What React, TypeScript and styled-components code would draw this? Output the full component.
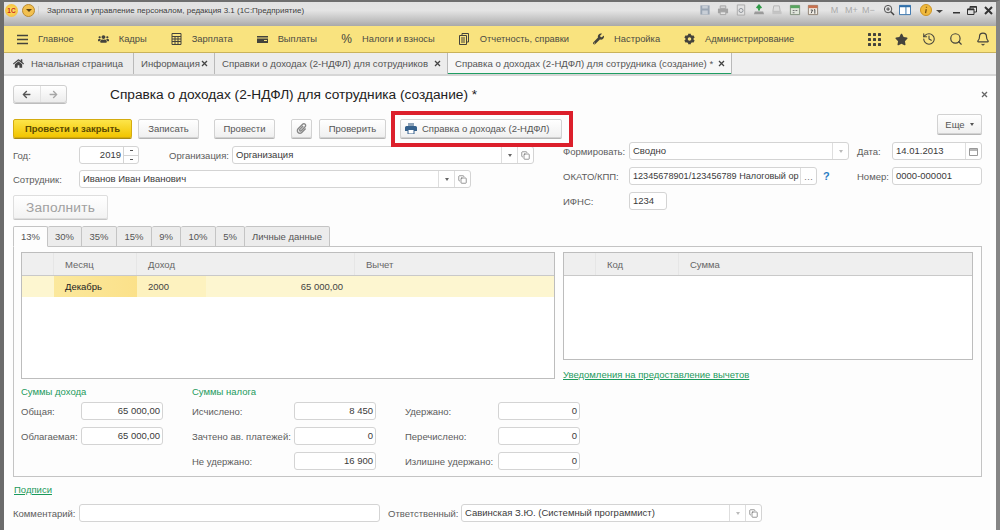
import React from "react";
import styled, { createGlobalStyle } from "styled-components";
import { FaHome, FaUsers, FaWrench, FaCog, FaStar, FaPaperclip, FaArrowLeft, FaArrowRight } from "react-icons/fa";
import { History, Search, Bell, Copy } from "lucide-react";

const GlobalStyle = createGlobalStyle`
  html, body {
    margin: 0;
    padding: 0;
    background: #fff;
  }
  * {
    box-sizing: border-box;
  }
`;

const Window = styled.div`
  width: 1000px;
  height: 530px;
  overflow: hidden;
  display: flex;
  flex-direction: column;
  font-family: "Liberation Sans", Arial, sans-serif;
  font-size: 9.5px;
  color: #4a4a4a;
  background: #fdfdfd;
  border-top: 2px solid #6e6e6e;
  border-left: 4px solid #6b6b6b;
  border-right: 4px solid #858585;
`;

/* заголовок окна */
const TitleBar = styled.div`
  height: 24px;
  flex: none;
  display: flex;
  align-items: center;
  padding: 0 0 8px 2px;
  background: linear-gradient(#e2e2e2 0%, #e4e4e4 35%, #bdbdbd 80%, #a9a9a9 100%);
  margin-left: -1px;
`;

const Logo = styled.div`
  width: 13px;
  height: 13px;
  border-radius: 50%;
  background: radial-gradient(#ffe26a, #f3b52c);
  color: #c8281e;
  font-size: 6.5px;
  font-weight: 700;
  line-height: 13px;
  text-align: center;
`;

const MenuRound = styled.div`
  width: 13px;
  height: 13px;
  margin-left: 4px;
  border-radius: 50%;
  background: #f2c04f;
  border: 1px solid #b98a2e;
  display: flex;
  align-items: center;
  justify-content: center;
  &::after {
    content: "";
    border-left: 3px solid transparent;
    border-right: 3px solid transparent;
    border-top: 3px solid #5a4212;
  }
`;

const WindowName = styled.div`
  margin-left: 3px;
  padding-left: 8px;
  border-left: 1px solid #cfcfcf;
  font-size: 8px;
  color: #3c3c3c;
  white-space: nowrap;
`;

const TitleTools = styled.div`
  margin-left: auto;
  display: flex;
  align-items: center;
  height: 16px;
`;

const ToolSlot = styled.div<{ $w: number; $mr?: number }>`
  width: ${(p) => p.$w}px;
  margin-right: ${(p) => p.$mr ?? 0}px;
  flex: none;
  display: flex;
  justify-content: center;
  align-items: center;
`;

const MemoryText = styled.span`
  font-size: 9px;
  color: #a9a9a9;
`;

const Svg13 = ({ children }: { children: React.ReactNode }) => (
  <svg width="12" height="12" viewBox="0 0 13 13" fill="none">
    {children}
  </svg>
);

/* панель разделов */
const NavBar = styled.div`
  height: 27px;
  flex: none;
  display: flex;
  align-items: center;
  padding-left: 13px;
  background: #f9e37f;
  border-bottom: 1px solid #c9b25a;
`;

const NavItem = styled.div`
  display: flex;
  align-items: center;
  margin-right: 24px;
  color: #4c4c44;
  font-size: 9.35px;
  white-space: nowrap;
`;

const NavIcon = styled.span`
  width: 11px;
  margin-right: 10px;
  display: flex;
  justify-content: center;
  color: #44433c;
  font-size: 12px;
`;

const NavRight = styled.div`
  margin-left: auto;
  display: flex;
  align-items: center;
  color: #44433c;
`;

const NavRightIcon = styled.span`
  width: 27px;
  display: flex;
  justify-content: center;
`;

/* вкладки открытых окон */
const OpenTabs = styled.div`
  height: 23px;
  flex: none;
  display: flex;
  background: #f0f0f0;
  border-bottom: 2px solid #d6d6d6;
  font-size: 9.65px;
`;

const OpenTab = styled.div<{ $w: number; $active?: boolean }>`
  width: ${(p) => p.$w}px;
  flex: none;
  display: flex;
  align-items: center;
  justify-content: space-between;
  padding: 0 6px 0 7px;
  white-space: nowrap;
  color: #555;
  background: ${(p) => (p.$active ? "#f7f7f7" : "#ececec")};
  border-right: 1px solid #b9b9b9;
  box-shadow: ${(p) => (p.$active ? "inset 0 -1px 0 #1f9e63" : "none")};
`;

const HomeLabel = styled.span`
  display: flex;
  align-items: center;
  gap: 7px;
  padding-left: 2px;
  font-size: 9.5px;
  svg {
    color: #444;
    font-size: 11px;
  }
`;

const CloseCross = styled.svg`
  width: 7px;
  height: 7px;
  flex: none;
`;

const Cross = ({ color = "#444" }: { color?: string }) => (
  <CloseCross viewBox="0 0 7 7">
    <path d="M1 1l5 5M6 1L1 6" stroke={color} strokeWidth="1.3" />
  </CloseCross>
);

/* форма */
const Form = styled.div`
  flex: 1;
  padding: 9px 14px 0 9px;
  display: flex;
  flex-direction: column;
`;

const Header = styled.div`
  height: 18px;
  margin-right: -6px;
  display: flex;
  align-items: center;
`;

const NavButtons = styled.div`
  width: 54px;
  height: 18px;
  display: flex;
  border: 1px solid #cfcfcf;
  border-radius: 3px;
  background: linear-gradient(#fff, #ececec);
  box-shadow: 0 1px 0 #bdbdbd;
  font-size: 9px;
`;

const ArrowBox = styled.span<{ $off?: boolean }>`
  flex: 1;
  display: flex;
  align-items: center;
  justify-content: center;
  color: ${(p) => (p.$off ? "#a6a6a6" : "#555")};
  & + & {
    border-left: 1px solid #e2e2e2;
  }
`;

const FormTitle = styled.h1`
  margin: 1px 0 0 43px;
  font-size: 13.7px;
  font-weight: 400;
  color: #222;
  white-space: nowrap;
`;

const HeaderClose = styled.div`
  margin-left: auto;
  display: flex;
`;

const Toolbar = styled.div`
  margin-top: 11px;
  height: 24px;
  display: flex;
  align-items: flex-end;
`;

const Button = styled.div<{ $w: number; $ml?: number; $primary?: boolean }>`
  width: ${(p) => p.$w}px;
  height: 19px;
  flex: none;
  margin-left: ${(p) => p.$ml ?? 0}px;
  display: flex;
  align-items: center;
  justify-content: center;
  gap: 6px;
  white-space: nowrap;
  border-radius: 2px;
  color: ${(p) => (p.$primary ? "#5b4a00" : "#555")};
  font-weight: ${(p) => (p.$primary ? 700 : 400)};
  background: ${(p) => (p.$primary ? "linear-gradient(#fde54a, #f2c500)" : "linear-gradient(#fff, #f0f0f0)")};
  border: 1px solid ${(p) => (p.$primary ? "#d4ac10" : "#d2d2d2")};
  box-shadow: 0 1px 0 ${(p) => (p.$primary ? "#a98a12" : "#b5b5b5")};
`;

const HighlightedButton = styled.div`
  position: relative;
  margin-left: 14px;
  display: flex;
  &::after {
    content: "";
    position: absolute;
    left: -9px;
    right: -11px;
    top: -8px;
    bottom: -9px;
    border: 4px solid #dc1f2b;
    pointer-events: none;
  }
`;

const PrintButton = styled(Button)`
  justify-content: flex-start;
  padding-left: 4px;
  gap: 5px;
`;

const MoreButton = styled(Button)`
  align-self: flex-start;
  margin-left: auto;
  height: 20px;
  gap: 5px;
  &::after {
    content: "";
    border-left: 2.5px solid transparent;
    border-right: 2.5px solid transparent;
    border-top: 3px solid #555;
  }
`;

const Upper = styled.div`
  height: 88px;
  flex: none;
  display: flex;
  gap: 29px;
`;

const LeftColumn = styled.div`
  width: 521px;
  padding-top: 8px;
  display: flex;
  flex-direction: column;
  gap: 6px;
`;

const RightColumn = styled.div`
  width: 419px;
  padding-top: 4px;
  display: flex;
  flex-direction: column;
  gap: 7px;
`;

const Row = styled.div`
  display: flex;
  align-items: center;
  height: 18px;
  flex: none;
`;

const Label = styled.div<{ $w: number; $ml?: number }>`
  width: ${(p) => p.$w}px;
  flex: none;
  margin-left: ${(p) => p.$ml ?? 0}px;
  white-space: nowrap;
  color: #5c5c5c;
`;

const Field = styled.div<{ $w: number }>`
  width: ${(p) => p.$w}px;
  height: 18px;
  flex: none;
  display: flex;
  background: #fff;
  border: 1px solid #d4d4d4;
  border-radius: 3px;
  color: #3a3a3a;
`;

const Value = styled.div<{ $right?: boolean }>`
  flex: 1;
  min-width: 0;
  overflow: hidden;
  white-space: nowrap;
  line-height: 16px;
  padding: 0 ${(p) => (p.$right ? "2px" : "3px")};
  text-align: ${(p) => (p.$right ? "right" : "left")};
`;

const TightValue = styled(Value)`
  padding-right: 0;
  font-size: 9.1px;
`;

const SideButton = styled.div<{ $w?: number }>`
  width: ${(p) => p.$w ?? 16}px;
  flex: none;
  display: flex;
  align-items: center;
  justify-content: center;
  border-left: 1px solid #dedede;
  color: #777;
`;

const SmallCaret = styled.span<{ $light?: boolean }>`
  border-left: 2px solid transparent;
  border-right: 2px solid transparent;
  border-top: 3px solid ${(p) => (p.$light ? "#bbb" : "#666")};
`;

const Spin = styled.div`
  width: 15px;
  flex: none;
  display: flex;
  flex-direction: column;
  border-left: 1px solid #d4d4d4;
`;

const SpinPart = styled.div<{ $down?: boolean }>`
  flex: 1;
  display: flex;
  align-items: center;
  justify-content: center;
  border-top: ${(p) => (p.$down ? "1px solid #d4d4d4" : "none")};
  &::after {
    content: "";
    width: 3px;
    height: 1px;
    background: #555;
  }
`;

const HelpMark = styled.span`
  width: 31px;
  padding-left: 6px;
  flex: none;
  color: #2b7fc4;
  font-weight: 700;
  font-size: 11px;
`;

const FillButton = styled.div`
  width: 95px;
  height: 24px;
  margin-top: 1px;
  display: flex;
  align-items: center;
  justify-content: center;
  color: #a0a0a0;
  font-size: 13.7px;
  letter-spacing: 0.2px;
  border: 1px solid #dedede;
  border-radius: 2px;
  background: linear-gradient(#fff, #f3f3f3);
  box-shadow: 0 1px 0 #c6c6c6;
`;

/* вкладки ставок */
const RateTabs = styled.div`
  height: 21px;
  flex: none;
  display: flex;
  position: relative;
  z-index: 1;
  margin-bottom: -1px;
`;

const RateTab = styled.div<{ $w: number; $active?: boolean }>`
  width: ${(p) => p.$w}px;
  display: flex;
  align-items: center;
  justify-content: center;
  white-space: nowrap;
  color: #555;
  background: ${(p) => (p.$active ? "#fdfdfd" : "#ececec")};
  border: 1px solid #c4c4c4;
  border-left-width: ${(p) => (p.$active ? 1 : 0)}px;
  border-bottom-color: ${(p) => (p.$active ? "#fdfdfd" : "#c4c4c4")};
  border-radius: 2px 2px 0 0;
`;

const Panel = styled.div`
  width: 969px;
  height: 231px;
  flex: none;
  padding: 5px 7px 0;
  border: 1px solid #c4c4c4;
  display: flex;
  flex-direction: column;
`;

const Tables = styled.div`
  height: 128px;
  flex: none;
  display: flex;
  gap: 8px;
`;

const TableBox = styled.div<{ $w: number; $h: number }>`
  width: ${(p) => p.$w}px;
  height: ${(p) => p.$h}px;
  flex: none;
  background: #fff;
  border: 1px solid #bdbdbd;
`;

const GridRow = styled.div<{ $cols: string; $head?: boolean }>`
  display: grid;
  grid-template-columns: ${(p) => p.$cols};
  height: ${(p) => (p.$head ? 23 : 21)}px;
  background: ${(p) => (p.$head ? "#efefef" : "#fdf6d0")};
  border-bottom: ${(p) => (p.$head ? "1px solid #c9c9c9" : "none")};
`;

const HeadCell = styled.div<{ $pl?: number }>`
  display: flex;
  align-items: center;
  padding-left: ${(p) => p.$pl ?? 11}px;
  color: #666;
  border-right: 1px solid #e6e6e6;
  &:last-child {
    border-right: none;
  }
`;

const Cell = styled.div<{ $selected?: boolean; $right?: boolean; $soft?: boolean }>`
  display: flex;
  align-items: center;
  justify-content: ${(p) => (p.$right ? "flex-end" : "flex-start")};
  padding: 0 ${(p) => (p.$right ? "12px" : "11px")};
  color: ${(p) => (p.$selected ? "#222" : "#444")};
  background: ${(p) => (p.$selected ? "linear-gradient(90deg, #fbe89c, #fbe18a)" : p.$soft ? "#fdf2bf" : "transparent")};
`;

const RightTableColumn = styled.div`
  display: flex;
  flex-direction: column;
`;

const GreenLink = styled.a`
  color: #1c9a5c;
  text-decoration: underline;
  white-space: nowrap;
`;

const NoticeLink = styled(GreenLink)`
  margin-top: 9px;
`;

const Totals = styled.div`
  margin-top: 7px;
  display: flex;
`;

const TotalsGroup = styled.div<{ $w: number }>`
  width: ${(p) => p.$w}px;
  flex: none;
  display: flex;
  flex-direction: column;
  gap: 7px;
`;

const GroupTitle = styled.div`
  height: 10px;
  line-height: 10px;
  color: #1c9a5c;
  margin-bottom: -2px;
  white-space: nowrap;
`;

const Spacer = styled.div`
  height: 10px;
  margin-bottom: -2px;
`;

const Signatures = styled.div`
  margin-top: 7px;
  height: 12px;
  line-height: 12px;
  padding-left: 1px;
`;

const CommentRow = styled(Row)`
  margin-top: 8px;
`;

const TitleIcons = () => (
  <TitleTools>
    <ToolSlot $w={18}>
      <Svg13>
        <path d="M1.5 1.5h10v10h-10z" fill="#9aa6b4" />
        <path d="M3.5 2h6v3h-6zM3.5 7h6v4h-6z" fill="#c8ced6" />
      </Svg13>
    </ToolSlot>
    <ToolSlot $w={18}>
      <Svg13>
        <path d="M3.5 2h6v3h-6z" fill="#d4d4d4" stroke="#a4a4a4" />
        <path d="M1 5h11v5H1z" fill="#a4a4a4" />
        <path d="M3.5 8.5h6v3h-6z" fill="#e4e4e4" stroke="#a4a4a4" />
      </Svg13>
    </ToolSlot>
    <ToolSlot $w={18}>
      <Svg13>
        <path d="M2.5 1h8v11h-8z" fill="#e2e2e2" stroke="#a8a8a8" />
        <circle cx="6.5" cy="7" r="2.2" stroke="#8a8f96" />
      </Svg13>
    </ToolSlot>
    <ToolSlot $w={18}>
      <Svg13>
        <path d="M2 8h9l1 3H1z" fill="#9a9a9a" />
        <path d="M6.5 7V3M4 4.5l2.5-3 2.5 3" stroke="#2e9a47" strokeWidth="2" />
      </Svg13>
    </ToolSlot>
    <ToolSlot $w={18}>
      <Svg13>
        <path d="M3 2h6l1 6H2z" fill="#dedede" stroke="#b4b4b4" />
        <path d="M1.5 8h10v3h-10z" fill="#c4c4c4" />
      </Svg13>
    </ToolSlot>
    <ToolSlot $w={18}>
      <Svg13>
        <path d="M1.5 1.5h10v10h-10z" fill="#dfe5da" stroke="#7d8d78" />
        <path d="M1.5 1.5h10v3h-10z" fill="#57a65e" />
        <path d="M4 6.5h2v1H4zM7 6.5h2v1H7zM4 9h2v1H4z" fill="#777" />
      </Svg13>
    </ToolSlot>
    <ToolSlot $w={18} $mr={4}>
      <Svg13>
        <path d="M1.5 1.5h10v10h-10z" fill="#f0ece4" stroke="#8b7e70" />
        <path d="M1.5 1.5h10v3h-10z" fill="#c8714f" />
        <path d="M4 6.5h2L4.5 10M7.5 6.5l1-.5v4.5" stroke="#444" />
      </Svg13>
    </ToolSlot>
    <ToolSlot $w={17}><MemoryText>M</MemoryText></ToolSlot>
    <ToolSlot $w={17}><MemoryText>M+</MemoryText></ToolSlot>
    <ToolSlot $w={17} $mr={4}><MemoryText>M−</MemoryText></ToolSlot>
    <ToolSlot $w={16}>
      <Svg13>
        <circle cx="5.5" cy="5.5" r="4" stroke="#444" />
        <path d="M8.5 8.5l3.5 3.5" stroke="#444" strokeWidth="1.6" />
        <path d="M3.5 5.5h4M5.5 3.5v4" stroke="#444" />
      </Svg13>
    </ToolSlot>
    <ToolSlot $w={16} $mr={5}>
      <Svg13>
        <path d="M.5 1.5h12v10H.5z" fill="#fff" stroke="#2f6ea8" />
        <path d="M.5 1.5h12v2H.5z" fill="#2f6ea8" />
        <path d="M7.5 2v9" stroke="#2f6ea8" />
      </Svg13>
    </ToolSlot>
    <ToolSlot $w={16}>
      <Svg13>
        <circle cx="6.5" cy="6.5" r="6" fill="#f0b93c" stroke="#c98f1e" />
        <path d="M7 3v1M6.8 5.5L6 10" stroke="#7a5310" strokeWidth="1.4" />
      </Svg13>
    </ToolSlot>
    <ToolSlot $w={10} $mr={4}>
      <svg width="7" height="6" viewBox="0 0 7 6">
        <path d="M0 3h7L3.5 6z" fill="#444" />
      </svg>
    </ToolSlot>
    <ToolSlot $w={16}>
      <svg width="7" height="8" viewBox="0 0 7 8">
        <path d="M0 6h7v1.5H0z" fill="#333" />
      </svg>
    </ToolSlot>
    <ToolSlot $w={16}>
      <svg width="10" height="9" viewBox="0 0 10 9" fill="none">
        <path d="M.5 3h6.5v5.5H.5zM3 3V.5h6.5V6H7" stroke="#333" />
        <path d="M.5 3.5h6.5M3 1h6.5" stroke="#333" strokeWidth="1.4" />
      </svg>
    </ToolSlot>
    <ToolSlot $w={16}>
      <svg width="9" height="9" viewBox="0 0 9 9">
        <path d="M1 1l7 7M8 1L1 8" stroke="#333" strokeWidth="2" />
      </svg>
    </ToolSlot>
  </TitleTools>
);

const MenuIcon = () => (
  <svg width="11" height="11" viewBox="0 0 11 11">
    <path d="M0 1.5h11M0 5.5h11M0 9.5h11" stroke="#44433c" strokeWidth="1.3" />
  </svg>
);

const CalcIcon = () => (
  <svg width="11" height="12" viewBox="0 0 11 12" fill="none">
    <path d="M1 .5h9v11H1z" stroke="#44433c" />
    <path d="M1 3.5h9M1 6h9M1 8.5h9M4 3.5v8M7 3.5v8" stroke="#44433c" />
  </svg>
);

const WalletIcon = () => (
  <svg width="11" height="9" viewBox="0 0 11 9">
    <path d="M0 1h11v7H0z" fill="#44433c" />
    <path d="M0 3h11" stroke="#f9e37f" />
    <path d="M7 5.5h3" stroke="#f9e37f" />
  </svg>
);

const ReportIcon = () => (
  <svg width="10" height="12" viewBox="0 0 10 12" fill="none">
    <path d="M3 2.5V.5h6.5v8.5H7.5" stroke="#44433c" />
    <path d="M.5 2.5h7v9h-7z" stroke="#44433c" />
    <path d="M2 5h4M2 7h4M2 9h4" stroke="#44433c" />
  </svg>
);

const GridIcon = () => (
  <svg width="13" height="13" viewBox="0 0 13 13" fill="#44433c">
    {[0, 5, 10].flatMap((y) =>
      [0, 5, 10].map((x) => <rect key={`${x}-${y}`} x={x} y={y} width="3" height="3" rx="0.6" />)
    )}
  </svg>
);

const CalendarIcon = () => (
  <svg width="9" height="9" viewBox="0 0 9 9" fill="none">
    <path d="M.5 1.5h8v7h-8z" stroke="#999" />
    <path d="M.5 3h8" stroke="#999" strokeWidth="1.4" />
  </svg>
);

const PrintIcon = () => (
  <svg width="12" height="11" viewBox="0 0 12 11">
    <path d="M3 0h6v3H3z" fill="#8ea3b8" />
    <path d="M1.5 3h9A1.5 1.5 0 0 1 12 4.5V8H0V4.5A1.5 1.5 0 0 1 1.5 3z" fill="#36618c" />
    <path d="M3 6.5h6V11H3z" fill="#fff" stroke="#36618c" />
  </svg>
);

const OpenButton = () => (
  <SideButton>
    <Copy size={9} strokeWidth={1.6} color="#555" />
  </SideButton>
);

const DropButton = ({ light }: { light?: boolean }) => (
  <SideButton>
    <SmallCaret $light={light} />
  </SideButton>
);

const navItems: { icon: React.ReactNode; label: string }[] = [
  { icon: <MenuIcon />, label: "Главное" },
  { icon: <FaUsers />, label: "Кадры" },
  { icon: <CalcIcon />, label: "Зарплата" },
  { icon: <WalletIcon />, label: "Выплаты" },
  { icon: "%", label: "Налоги и взносы" },
  { icon: <ReportIcon />, label: "Отчетность, справки" },
  { icon: <FaWrench />, label: "Настройка" },
  { icon: <FaCog />, label: "Администрирование" },
];

const rateTabs = [
  { label: "13%", w: 35 },
  { label: "30%", w: 34 },
  { label: "35%", w: 35 },
  { label: "15%", w: 35 },
  { label: "9%", w: 29 },
  { label: "10%", w: 35 },
  { label: "5%", w: 29 },
  { label: "Личные данные", w: 85 },
];

const incomeTotals = [
  { label: "Общая:", value: "65 000,00" },
  { label: "Облагаемая:", value: "65 000,00" },
];

const taxTotals = [
  { label: "Исчислено:", value: "8 450" },
  { label: "Зачтено ав. платежей:", value: "0" },
  { label: "Не удержано:", value: "16 900" },
];

const heldTotals = [
  { label: "Удержано:", value: "0" },
  { label: "Перечислено:", value: "0" },
  { label: "Излишне удержано:", value: "0" },
];

const TotalRow = ({ label, value, labelW }: { label: string; value: string; labelW: number }) => (
  <Row>
    <Label $w={labelW}>{label}</Label>
    <Field $w={82}>
      <Value $right>{value}</Value>
    </Field>
  </Row>
);

const App = () => {
  return (
    <Window>
      <GlobalStyle />
      <TitleBar>
        <Logo>1С</Logo>
        <MenuRound />
        <WindowName>Зарплата и управление персоналом, редакция 3.1 (1С:Предприятие)</WindowName>
        <TitleIcons />
      </TitleBar>

      <NavBar>
        {navItems.map((item) => (
          <NavItem key={item.label}>
            <NavIcon>{item.icon}</NavIcon>
            {item.label}
          </NavItem>
        ))}
        <NavRight>
          <NavRightIcon><GridIcon /></NavRightIcon>
          <NavRightIcon><FaStar size={13} /></NavRightIcon>
          <NavRightIcon><History size={14} strokeWidth={1.8} /></NavRightIcon>
          <NavRightIcon><Search size={14} strokeWidth={2} /></NavRightIcon>
          <NavRightIcon><Bell size={14} strokeWidth={2} /></NavRightIcon>
        </NavRight>
      </NavBar>

      <OpenTabs>
        <OpenTab $w={130}>
          <HomeLabel>
            <FaHome />
            Начальная страница
          </HomeLabel>
        </OpenTab>
        <OpenTab $w={81}>
          Информация
          <Cross />
        </OpenTab>
        <OpenTab $w={233}>
          Справки о доходах (2-НДФЛ) для сотрудников
          <Cross />
        </OpenTab>
        <OpenTab $w={284} $active>
          Справка о доходах (2-НДФЛ) для сотрудника (создание) *
          <Cross />
        </OpenTab>
      </OpenTabs>

      <Form>
        <Header>
          <NavButtons>
            <ArrowBox><FaArrowLeft /></ArrowBox>
            <ArrowBox $off><FaArrowRight /></ArrowBox>
          </NavButtons>
          <FormTitle>Справка о доходах (2-НДФЛ) для сотрудника (создание) *</FormTitle>
          <HeaderClose>
            <Cross color="#666" />
          </HeaderClose>
        </Header>

        <Toolbar>
          <Button $w={119} $primary>Провести и закрыть</Button>
          <Button $w={61} $ml={6}>Записать</Button>
          <Button $w={61} $ml={15}>Провести</Button>
          <Button $w={21} $ml={16}><FaPaperclip color="#888" size={11} /></Button>
          <Button $w={67} $ml={7}>Проверить</Button>
          <HighlightedButton>
            <PrintButton $w={162}>
              <PrintIcon />
              Справка о доходах (2-НДФЛ)
            </PrintButton>
          </HighlightedButton>
          <MoreButton $w={45}>Еще</MoreButton>
        </Toolbar>

        <Upper>
          <LeftColumn>
            <Row>
              <Label $w={66}>Год:</Label>
              <Field $w={60}>
                <Value $right>2019</Value>
                <Spin>
                  <SpinPart />
                  <SpinPart $down />
                </Spin>
              </Field>
              <Label $w={63} $ml={30}>Организация:</Label>
              <Field $w={302}>
                <Value>Организация</Value>
                <DropButton />
                <OpenButton />
              </Field>
            </Row>
            <Row>
              <Label $w={66}>Сотрудник:</Label>
              <Field $w={392}>
                <Value>Иванов Иван Иванович</Value>
                <DropButton />
                <OpenButton />
              </Field>
            </Row>
            <FillButton>Заполнить</FillButton>
          </LeftColumn>

          <RightColumn>
            <Row>
              <Label $w={66}>Формировать:</Label>
              <Field $w={220}>
                <Value>Сводно</Value>
                <DropButton light />
              </Field>
              <Label $w={35} $ml={8}>Дата:</Label>
              <Field $w={90}>
                <Value>14.01.2013</Value>
                <SideButton><CalendarIcon /></SideButton>
              </Field>
            </Row>
            <Row>
              <Label $w={66}>ОКАТО/КПП:</Label>
              <Field $w={188}>
                <TightValue>12345678901/123456789 Налоговый ор</TightValue>
                <SideButton>…</SideButton>
              </Field>
              <HelpMark>?</HelpMark>
              <Label $w={35} $ml={9}>Номер:</Label>
              <Field $w={90}>
                <Value>0000-000001</Value>
              </Field>
            </Row>
            <Row>
              <Label $w={66}>ИФНС:</Label>
              <Field $w={38}>
                <Value>1234</Value>
              </Field>
            </Row>
          </RightColumn>
        </Upper>

        <RateTabs>
          {rateTabs.map((tab, index) => (
            <RateTab key={tab.label} $w={tab.w} $active={index === 0}>
              {tab.label}
            </RateTab>
          ))}
        </RateTabs>

        <Panel>
          <Tables>
            <TableBox $w={534} $h={127}>
              <GridRow $head $cols="32px 83px 218px 1fr">
                <HeadCell />
                <HeadCell>Месяц</HeadCell>
                <HeadCell>Доход</HeadCell>
                <HeadCell>Вычет</HeadCell>
              </GridRow>
              <GridRow $cols="32px 83px 69px 149px 1fr">
                <Cell />
                <Cell $selected>Декабрь</Cell>
                <Cell $soft>2000</Cell>
                <Cell $right>65 000,00</Cell>
                <Cell />
              </GridRow>
            </TableBox>
            <RightTableColumn>
              <TableBox $w={410} $h={108}>
                <GridRow $head $cols="32px 83px 1fr">
                  <HeadCell />
                  <HeadCell>Код</HeadCell>
                  <HeadCell>Сумма</HeadCell>
                </GridRow>
              </TableBox>
              <NoticeLink>Уведомления на предоставление вычетов</NoticeLink>
            </RightTableColumn>
          </Tables>

          <Totals>
            <TotalsGroup $w={171}>
              <GroupTitle>Суммы дохода</GroupTitle>
              {incomeTotals.map((t) => (
                <TotalRow key={t.label} label={t.label} value={t.value} labelW={60} />
              ))}
            </TotalsGroup>
            <TotalsGroup $w={213}>
              <GroupTitle>Суммы налога</GroupTitle>
              {taxTotals.map((t) => (
                <TotalRow key={t.label} label={t.label} value={t.value} labelW={102} />
              ))}
            </TotalsGroup>
            <TotalsGroup $w={175}>
              <Spacer />
              {heldTotals.map((t) => (
                <TotalRow key={t.label} label={t.label} value={t.value} labelW={93} />
              ))}
            </TotalsGroup>
          </Totals>
        </Panel>

        <Signatures>
          <GreenLink>Подписи</GreenLink>
        </Signatures>

        <CommentRow>
          <Label $w={66}>Комментарий:</Label>
          <Field $w={301} />
          <Label $w={73} $ml={8}>Ответственный:</Label>
          <Field $w={301}>
            <Value>Савинская З.Ю. (Системный программист)</Value>
            <DropButton light />
            <OpenButton />
          </Field>
        </CommentRow>
      </Form>
    </Window>
  );
};

export default App;
